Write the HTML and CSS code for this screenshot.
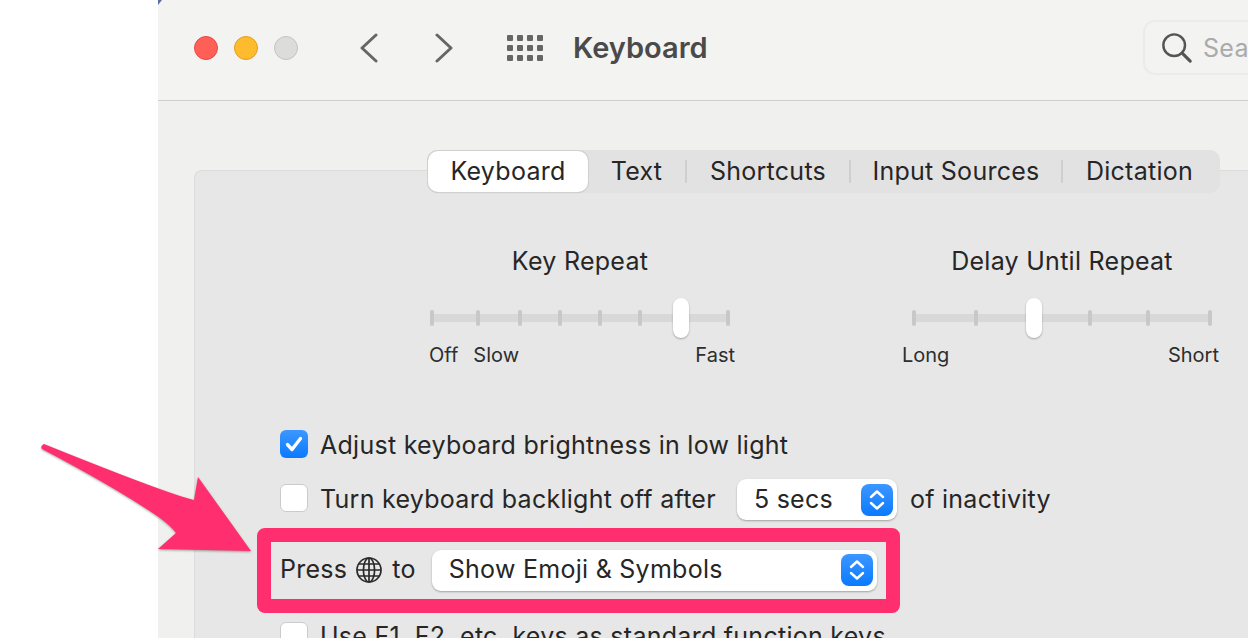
FILE: index.html
```html
<!DOCTYPE html>
<html lang="en">
<head>
<meta charset="utf-8">
<title>Keyboard</title>
<link rel="stylesheet" href="styles.css">
</head>
<body>
<div class="page">
  <div class="gutter"></div>
  <div class="window">
    <header class="titlebar">
      <div class="lights">
        <span class="light red"></span>
        <span class="light yellow"></span>
        <span class="light grey"></span>
      </div>
      <svg class="nav-icon back" width="20" height="30" viewBox="0 0 20 30"><path d="M17 2 L3 15 L17 28" fill="none" stroke="#666" stroke-width="3" stroke-linecap="round" stroke-linejoin="round"/></svg>
      <svg class="nav-icon forward" width="20" height="30" viewBox="0 0 20 30"><path d="M3 2 L17 15 L3 28" fill="none" stroke="#666" stroke-width="3" stroke-linecap="round" stroke-linejoin="round"/></svg>
      <div class="apps">
        <i></i><i></i><i></i><i></i><i></i><i></i><i></i><i></i><i></i><i></i><i></i><i></i>
      </div>
      <h1 class="title">Keyboard</h1>
      <div class="search">
        <svg width="32" height="32" viewBox="0 0 34 34"><circle cx="14" cy="14" r="11.5" fill="none" stroke="#555" stroke-width="2.6"/><path d="M22.5 22.5 L31 31" fill="none" stroke="#555" stroke-width="3.4" stroke-linecap="round"/></svg>
        <span class="search-text">Search</span>
      </div>
    </header>
    <main class="content">
      <section class="panel">
        <nav class="tabs">
          <span class="tab active w-keyboard">Keyboard</span>
          <span class="tab w-text">Text</span>
          <span class="sep"></span>
          <span class="tab w-shortcuts">Shortcuts</span>
          <span class="sep"></span>
          <span class="tab w-input">Input Sources</span>
          <span class="sep"></span>
          <span class="tab w-dictation">Dictation</span>
        </nav>
        <div class="sliders">
          <div class="slider-group">
            <div class="slider-title">Key Repeat</div>
            <div class="slider">
              <div class="track"></div>
              <span class="tick" style="left:0"></span>
              <span class="tick" style="left:46px"></span>
              <span class="tick" style="left:88px"></span>
              <span class="tick" style="left:128px"></span>
              <span class="tick" style="left:168px"></span>
              <span class="tick" style="left:208px"></span>
              <span class="tick" style="left:296px"></span>
              <span class="thumb" style="left:243px"></span>
            </div>
            <div class="slider-labels repeat">
              <span class="off">Off</span><span>Slow</span><span class="push">Fast</span>
            </div>
          </div>
          <div class="slider-group">
            <div class="slider-title">Delay Until Repeat</div>
            <div class="slider">
              <div class="track"></div>
              <span class="tick" style="left:0"></span>
              <span class="tick" style="left:62px"></span>
              <span class="tick" style="left:176px"></span>
              <span class="tick" style="left:234px"></span>
              <span class="tick" style="left:296px"></span>
              <span class="thumb" style="left:114px"></span>
            </div>
            <div class="slider-labels delay">
              <span>Long</span><span class="push">Short</span>
            </div>
          </div>
        </div>
        <div class="options">
          <div class="row first">
            <span class="check on">
              <svg width="20" height="18" viewBox="0 0 20 18"><path d="M3.5 9.5 L8 14.5 L16.5 3.5" fill="none" stroke="#fff" stroke-width="3.4" stroke-linecap="round" stroke-linejoin="round"/></svg>
            </span>
            <span class="lower">Adjust keyboard brightness in low light</span>
          </div>
          <div class="row second">
            <span class="check"></span>
            <span class="raise">Turn keyboard backlight off after</span>
            <span class="select small">
              <span class="raise">5 secs</span>
              <span class="stepper"><svg width="18" height="24" viewBox="0 0 18 24"><path d="M3 9 L9 3.5 L15 9 M3 15 L9 20.5 L15 15" fill="none" stroke="#fff" stroke-width="2.4" stroke-linecap="round" stroke-linejoin="round"/></svg></span>
            </span>
            <span class="after raise">of inactivity</span>
          </div>
          <div class="highlight">
            <span class="raise">Press</span>
            <svg class="globe" width="28" height="28" viewBox="0 0 28 28"><g fill="none" stroke="#2a2a2a" stroke-width="1.7"><circle cx="14" cy="14" r="12"/><ellipse cx="14" cy="14" rx="5.6" ry="12"/><path d="M14 2 V26 M2 14 H26 M3.8 8 H24.2 M3.8 20 H24.2"/></g></svg>
            <span class="raise">to</span>
            <span class="select wide">
              <span class="raise">Show Emoji &amp; Symbols</span>
              <span class="stepper"><svg width="18" height="24" viewBox="0 0 18 24"><path d="M3 9 L9 3.5 L15 9 M3 15 L9 20.5 L15 15" fill="none" stroke="#fff" stroke-width="2.4" stroke-linecap="round" stroke-linejoin="round"/></svg></span>
            </span>
          </div>
          <div class="row last">
            <span class="check"></span>
            <span>Use F1, F2, etc. keys as standard function keys</span>
          </div>
        </div>
      </section>
    </main>
  </div>
</div>
<svg class="arrow" width="230" height="130" viewBox="0 0 230 130">
  <path d="M6 2 Q2 4 4 7 Q80 47 122 76 Q134 85 138 91 L120 107 L213 109 L160 35 L156 58 Q130 52 6 2 Z" fill="#ff2e6e"/>
</svg>
<svg class="fleck" width="4" height="5" viewBox="0 0 4 5"><path d="M0 0 H4 L0 5 Z" fill="#5a6ea8"/></svg>
</body>
</html>
```
FILE: styles.css
```css
* { box-sizing: border-box; }
html, body { margin: 0; height: 100%; }
body {
  background: #fff;
  color: #262626;
  font-family: Inter, "Liberation Sans", sans-serif;
  font-size: 25px;
  letter-spacing: .27px;
  overflow: hidden;
}
.page { display: flex; height: 638px; overflow: hidden; }
.gutter { width: 158px; flex: none; background: #fff; }
.window { flex: 1; min-width: 0; display: flex; flex-direction: column; background: #f0f0ef; }

.titlebar {
  height: 101px;
  flex: none;
  display: flex;
  align-items: center;
  padding: 0 0 5px 36px;
  background: #f3f3f2;
  border-bottom: 1px solid #cfcfcf;
  overflow: hidden;
}
.lights { display: flex; gap: 16px; }
.light { width: 24px; height: 24px; border-radius: 50%; border: 1px solid transparent; }
.red { background: #ff5f57; border-color: #e64a45; }
.yellow { background: #ffbb2e; border-color: #e0a020; }
.grey { background: #dcdcdc; border-color: #c4c4c4; }
.nav-icon { flex: none; }
.back { margin-left: 61px; }
.forward { margin-left: 55px; }
.apps {
  display: grid;
  grid-template-columns: repeat(4, 6px);
  gap: 4px;
  column-gap: 4px;
  margin-left: 53px;
}
.apps i { width: 6px; height: 6px; background: #666; border-radius: 1px; }
.title { margin: 0 0 0 30px; font-size: 29px; font-weight: 600; letter-spacing: 0; color: #4a4a4a; white-space: nowrap; }
.search {
  flex: none;
  margin-left: auto;
  width: 141px;
  margin-right: -36px;
  height: 55px;
  display: flex;
  align-items: center;
  gap: 10px;
  padding-left: 16px;
  border: 2px solid #ebebeb;
  border-radius: 12px;
  overflow: hidden;
}
.search svg { flex: none; }
.search-text { color: #aaa; white-space: nowrap; }

.content { flex: 1; min-height: 0; padding: 69px 0 0 36px; overflow: hidden; }
.panel {
  height: 520px;
  background: #e7e7e7;
  border: 1px solid #dcdcdc;
  border-right: 0;
  border-radius: 8px 0 0 0;
}

.tabs {
  width: 793px;
  height: 43px;
  margin: -21px 0 0 232px;
  display: flex;
  align-items: center;
  background: #e2e2e2;
  border-radius: 10px;
}
.tab { text-align: center; white-space: nowrap; flex: none; padding-bottom: 2px; }
.tab.active {
  height: 41px;
  line-height: 41px;
  padding-bottom: 0;
  background: #fff;
  border-radius: 10px;
  box-shadow: 0 0 0 1px #d0d0d0, 0 1px 1px #bbb;
}
.w-keyboard { width: 160px; margin-left: 1px; }
.w-text { width: 97px; }
.w-shortcuts { width: 162px; }
.w-input { width: 210px; }
.w-dictation { width: 153px; }
.sep { width: 2px; height: 23px; background: #cfcfcf; flex: none; }

.sliders { display: flex; gap: 182px; margin: 53px 0 0 235px; }
.slider-group { width: 300px; flex: none; }
.slider-title { text-align: center; line-height: 30px; white-space: nowrap; }
.slider { position: relative; height: 40px; margin-top: 22px; }
.track { position: absolute; left: 0; right: 0; top: 16px; height: 8px; background: #d8d8d8; }
.tick { position: absolute; top: 12px; width: 4px; height: 16px; background: #c8c8c8; border-radius: 2px; }
.thumb {
  position: absolute;
  top: 0;
  width: 16px;
  height: 40px;
  background: #fff;
  border-radius: 8px;
  box-shadow: 0 1px 2px rgba(0,0,0,.3);
}
.slider-labels { display: flex; gap: 15px; margin-top: 5px; font-size: 20px; letter-spacing: 0; line-height: 24px; color: #2e2e2e; white-space: nowrap; }
.slider-labels .push { margin-left: auto; }
.repeat { margin-left: -1px; margin-right: -5px; }
.delay { margin-left: -10px; margin-right: -7px; }

.options { margin: 63px 0 0 85px; }
.row { display: flex; align-items: center; gap: 12px; white-space: nowrap; }
.first { height: 28px; }
.second { height: 41px; margin-top: 21px; }
.last { margin-top: 9px; height: 28px; }
.lower { margin-top: 2px; }
.raise { margin-bottom: 2px; }
.check {
  width: 28px;
  height: 28px;
  flex: none;
  display: flex;
  align-items: center;
  justify-content: center;
  background: #fff;
  border: 1px solid #cbcbcb;
  border-radius: 6px;
}
.second .check { margin-top: -3px; }
.check.on { background: linear-gradient(#3d97ff, #0a7aff); border: 0; }
.select {
  display: flex;
  align-items: center;
  justify-content: space-between;
  height: 41px;
  padding: 0 4px 0 17px;
  background: #fff;
  border-radius: 9px;
  box-shadow: 0 1px 2px rgba(0,0,0,.3);
  flex: none;
}
.small { width: 160px; margin-left: 9px; }
.wide { width: 445px; margin-left: 7px; }
.after { margin-left: 1px; }
.stepper {
  width: 32px;
  height: 32px;
  display: flex;
  align-items: center;
  justify-content: center;
  border-radius: 8px;
  background: linear-gradient(#3d97ff, #0a7aff);
}
.highlight {
  width: 643px;
  height: 85px;
  margin: 8px 0 0 -23px;
  padding: 0 0 1px 9px;
  display: flex;
  align-items: center;
  gap: 9px;
  border: 14px solid #ff2e6e;
  border-radius: 8px;
  white-space: nowrap;
}
.globe { flex: none; margin-left: -1px; }

.arrow {
  position: absolute;
  left: 38px;
  top: 442px;
  filter: drop-shadow(0 1px 1px rgba(0,0,0,.35));
}
.fleck { position: absolute; left: 158px; top: 0; }
```
